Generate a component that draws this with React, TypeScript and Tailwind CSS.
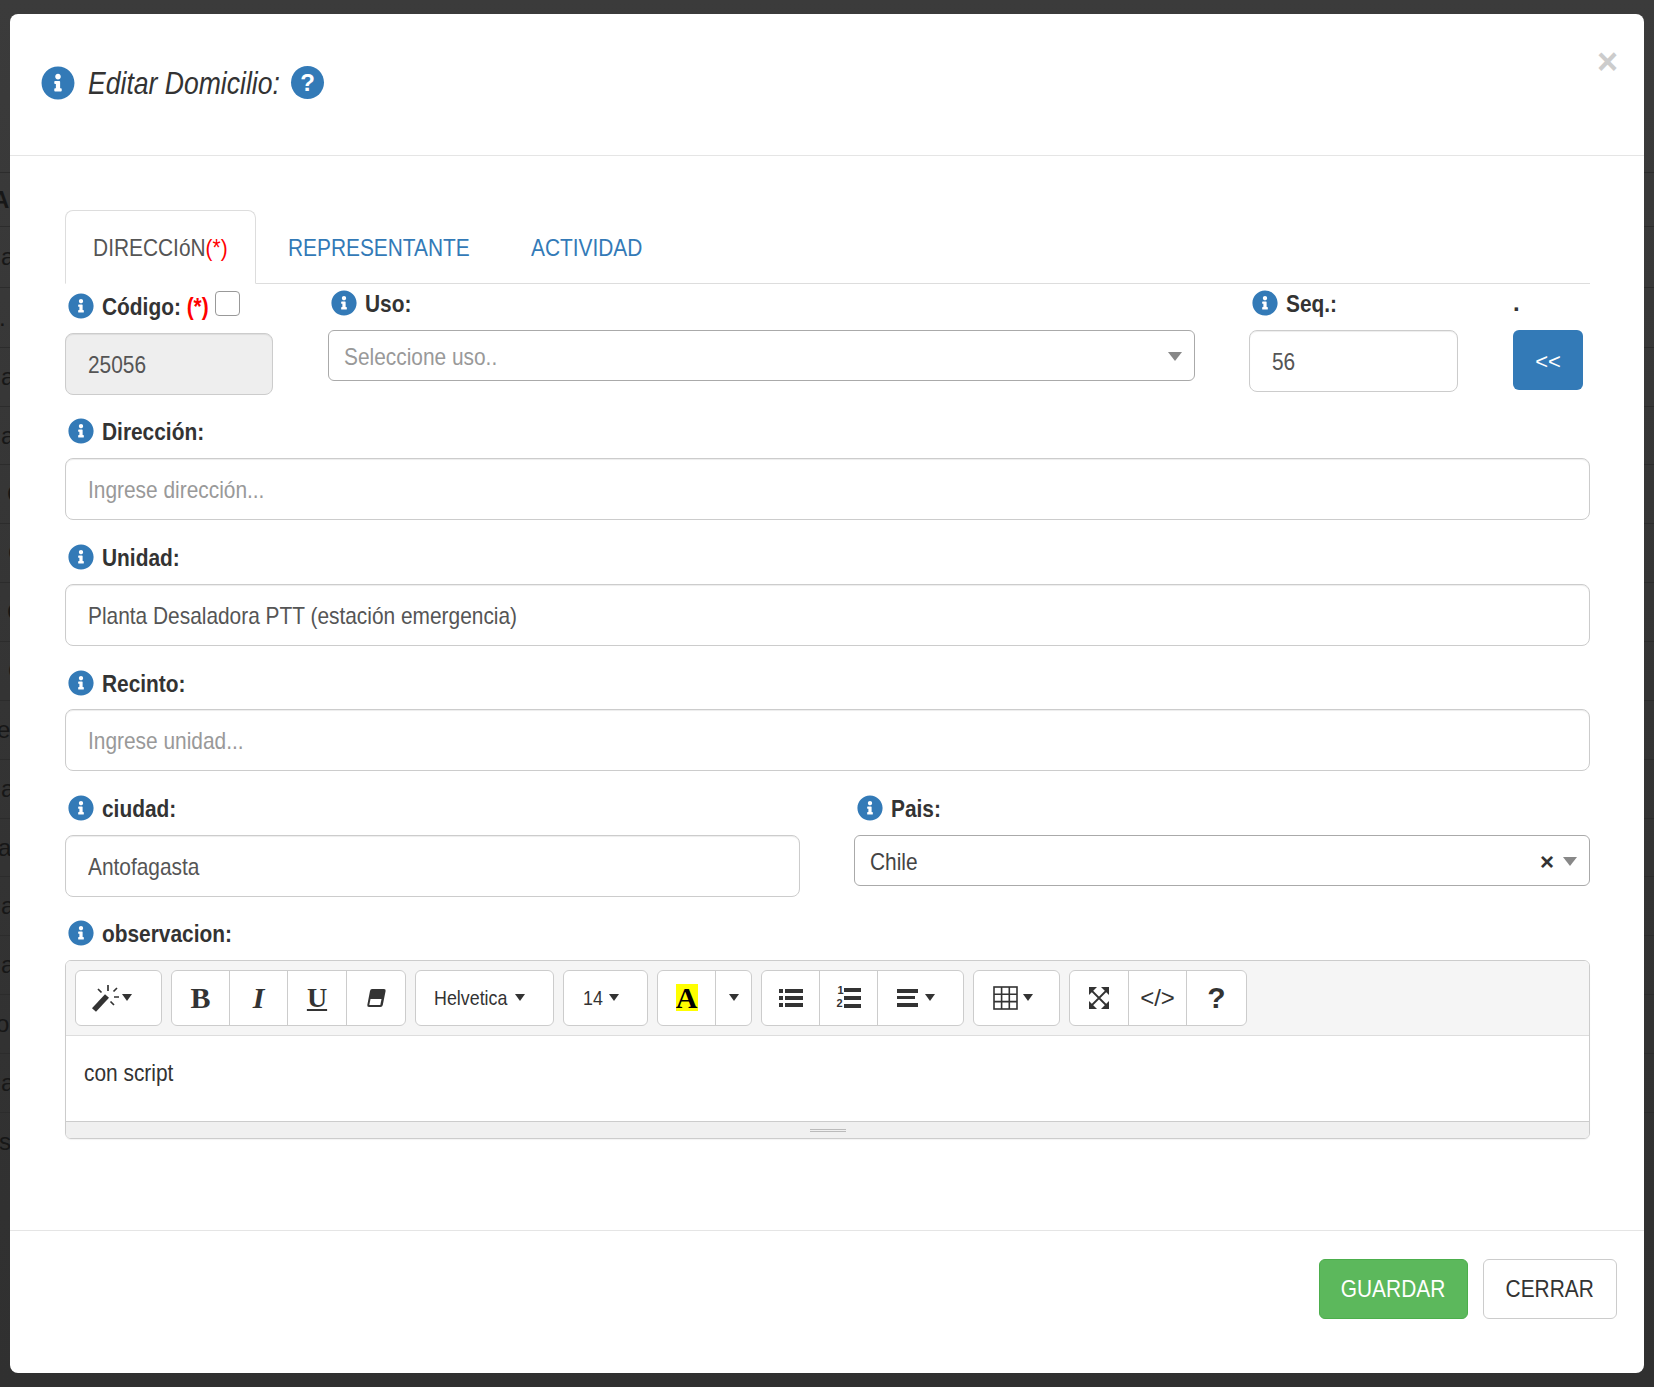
import React from 'react';
import { FaInfoCircle } from 'react-icons/fa';

// text in the reference is narrower than Liberation Sans, same height
const T = ({ children, center }: { children: React.ReactNode; center?: boolean }) => (
  <span className={`inline-block whitespace-nowrap scale-x-[0.87] ${center ? 'origin-center' : 'origin-left'}`}>{children}</span>
);

const Label = ({ text, extra }: { text: string; extra?: React.ReactNode }) => (
  <div className="flex items-center h-[26px] pl-[3px]">
    <FaInfoCircle className="w-[26px] h-[26px] text-[#337ab7] shrink-0" />
    <span className="ml-[8px] pt-[1px] font-bold text-[24px] text-[#333]">
      <T>
        {text}
        {extra && ' '}
        {extra && <span className="text-[#f00]">(*)</span>}
      </T>
    </span>
    {extra}
  </div>
);

const inputCls =
  'flex items-center h-[62px] px-[22px] pt-[1px] border border-[#ccc] rounded-[8px] text-[24px] bg-white shadow-[inset_0_1px_1px_rgba(0,0,0,0.075)]';

const selectCls = 'mt-[14px] flex items-center h-[51px] border border-[#aaa] rounded-[6px] text-[24px]';

const Caret = ({ cls = '' }: { cls?: string }) => (
  <span className={`inline-block w-0 h-0 border-x-[5px] border-x-transparent border-t-[7px] border-t-[#333] ${cls}`} />
);

const SelectArrow = () => <span className="w-0 h-0 border-x-[7px] border-x-transparent border-t-[9px] border-t-[#888]" />;

const TBtn = ({ cls, children }: { cls: string; children: React.ReactNode }) => (
  <div className={`flex items-center justify-center h-full border-r border-[#ccc] last:border-r-0 ${cls}`}>{children}</div>
);

const Group = ({ children }: { children: React.ReactNode }) => (
  <div className="flex h-[56px] bg-white border border-[#ccc] rounded-[6px]">{children}</div>
);

const Wand = () => (
  <svg width="30" height="30" viewBox="0 0 30 30" fill="none" stroke="#333">
    <path d="M3 27 L16 13" strokeWidth="5.5" />
    <path d="M17 2v6M7 6l3.500 3.500M26 5l-3.500 3.500M28 14h-5M23 22l-3.500-3.500" strokeWidth="1.7" />
  </svg>
);

const Eraser = () => (
  <svg width="20" height="20" viewBox="0 0 20 20">
    <path d="M6 1h12q2 0 1.600 2l-2.800 14q-.4 2-2.400 2H3q-2 0-1.700-2L4 3q.4-2 2-2z" fill="#333" />
    <path d="M4.500 11h11l-1.200 6H3.300z" fill="#fff" />
  </svg>
);

const ListUl = () => (
  <svg width="24" height="20" viewBox="0 0 24 20" fill="#333">
    <rect x="0" y="1" width="4" height="4" />
    <rect x="6" y="1" width="18" height="4" />
    <rect x="0" y="8" width="4" height="4" />
    <rect x="6" y="8" width="18" height="4" />
    <rect x="0" y="15" width="4" height="4" />
    <rect x="6" y="15" width="18" height="4" />
  </svg>
);

const ListOl = () => (
  <div className="relative w-[24px] h-[22px] leading-none">
    <span className="absolute left-[1px] -top-[2px] text-[11px] font-bold">1</span>
    <span className="absolute left-0 top-[11px] text-[11px] font-bold">2</span>
    <svg width="24" height="22" viewBox="0 0 24 22" fill="#333">
      <rect x="7" y="1" width="17" height="4" />
      <rect x="7" y="9" width="17" height="4" />
      <rect x="7" y="17" width="17" height="4" />
    </svg>
  </div>
);

const AlignIcon = () => (
  <svg width="22" height="20" viewBox="0 0 22 20" fill="#333">
    <rect x="0" y="1" width="21" height="4" />
    <rect x="0" y="8" width="18" height="3" />
    <rect x="0" y="15" width="21" height="4" />
  </svg>
);

const TableIcon = () => (
  <svg width="25" height="24" viewBox="0 0 25 24" fill="none" stroke="#333" strokeWidth="1.6">
    <rect x="1" y="1" width="23" height="22" />
    <path d="M1 8.300h23M1 15.600h23M8.600 1v22M16.300 1v22" />
  </svg>
);

const Fullscreen = () => (
  <svg width="22" height="24" viewBox="0 0 22 24" fill="#333">
    <path d="M3 4L19 20M19 4L3 20" stroke="#333" strokeWidth="1.8" />
    <path d="M1 1h8L1 9zM21 1h-8l8 8zM1 23h8l-8-8zM21 23h-8l8-8z" />
  </svg>
);

// table rows of the page behind the modal
const rows = [
  { h: 'h-[54px]', glyph: 'A', cls: '-ml-[8px] font-bold' },
  { h: 'h-[61px]', glyph: 'a', cls: 'ml-[1px]' },
  { h: 'h-[60px]', glyph: '. C', cls: '-ml-[1px]' },
  { h: 'h-[59px]', glyph: 'a', cls: 'ml-[1px]' },
  { h: 'h-[58px]', glyph: 'a', cls: 'ml-[1px]' },
  { h: 'h-[59px]', glyph: 'C', cls: 'ml-[7px]' },
  { h: 'h-[59px]', glyph: 'C', cls: 'ml-[8px]' },
  { h: 'h-[59px]', glyph: 'C', cls: 'ml-[7px]' },
  { h: 'h-[59px]', glyph: 'C', cls: 'ml-[8px]' },
  { h: 'h-[59px]', glyph: 'e:', cls: '-ml-[3px]' },
  { h: 'h-[59px]', glyph: 'a', cls: 'ml-[1px]' },
  { h: 'h-[58px]', glyph: 'ac', cls: '-ml-[2px]' },
  { h: 'h-[59px]', glyph: 'a', cls: 'ml-[1px]' },
  { h: 'h-[59px]', glyph: 'a', cls: 'ml-[1px]' },
  { h: 'h-[59px]', glyph: 'o', cls: '-ml-[4px]' },
  { h: 'h-[59px]', glyph: 'a', cls: 'ml-[1px]' },
  { h: 'h-[59px]', glyph: 's', cls: '-ml-[1px]' },
];

export default function App() {
  return (
    <div className="relative h-[1387px] w-[1654px] overflow-hidden bg-gradient-to-b from-[#3b3b3b] via-[#343434] to-[#303030] font-['Liberation_Sans',sans-serif] text-[#333]">
      <div className="pt-[172px] text-[24px] text-[#171717]">
        {rows.map((r, i) => (
          <div key={i} className={`flex items-center border-t border-[#2c2c2c] ${r.h}`}>
            <span className={r.cls}>{r.glyph}</span>
          </div>
        ))}
      </div>

      <div className="absolute left-[10px] top-[14px] w-[1634px] h-[1359px] bg-white rounded-[8px] flex flex-col">
        <div className="relative h-[142px] border-b border-[#e5e5e5] flex items-center pl-[31px] pb-[4px] shrink-0">
          <FaInfoCircle className="w-[34px] h-[34px] text-[#337ab7]" />
          <span className="ml-[13px] w-[203px] italic text-[32px]">
            <span className="inline-block whitespace-nowrap origin-left scale-x-[0.83]">Editar Domicilio:</span>
          </span>
          <span className="flex items-center justify-center w-[33px] h-[33px] rounded-full bg-[#337ab7] text-white font-bold text-[24px] leading-none">?</span>
          <span className="absolute right-[26px] top-[30px] text-[36px] font-bold text-[#ccc] leading-none">×</span>
        </div>

        <div className="flex-1 pl-[55px] pr-[54px] pt-[54px]">
          <div className="flex h-[74px] border-b border-[#ddd]">
            <div className="w-[191px] h-[74px] bg-white border border-[#ddd] border-b-white rounded-t-[8px] flex items-center justify-center text-[24px] text-[#555] pt-[2px]">
              <T center>
                DIRECCIóN<span className="text-[#f00]">(*)</span>
              </T>
            </div>
            <div className="ml-[32px] flex items-center text-[24px] text-[#337ab7] pt-[3px]"><T>REPRESENTANTE</T></div>
            <div className="ml-[34px] flex items-center text-[24px] text-[#337ab7] pt-[3px]"><T>ACTIVIDAD</T></div>
          </div>

          <div className="flex">
            <div className="w-[208px] pt-[9px]">
              <Label
                text="Código:"
                extra={<span className="-ml-[10px] -mt-[5px] w-[25px] h-[25px] shrink-0 border border-[#999] rounded-[4px] bg-white" />}
              />
              <div className={`${inputCls} mt-[14px] !bg-[#eee] text-[#555]`}><T>25056</T></div>
            </div>
            <div className="ml-[55px] w-[867px] pt-[6px]">
              <Label text="Uso:" />
              <div className={`${selectCls} justify-between pl-[15px] pr-[12px] pt-[2px] text-[#999]`}>
                <T>Seleccione uso..</T>
                <SelectArrow />
              </div>
            </div>
            <div className="ml-[54px] w-[209px] pt-[6px]">
              <Label text="Seq.:" />
              <div className={`${inputCls} mt-[14px] text-[#555]`}><T>56</T></div>
            </div>
            <div className="ml-[55px] w-[70px] pt-[6px]">
              <div className="h-[26px] font-bold text-[24px] leading-[26px]">.</div>
              <div className="mt-[14px] flex items-center justify-center h-[60px] pt-[3px] rounded-[6px] bg-[#337ab7] text-white text-[22px]">&lt;&lt;</div>
            </div>
          </div>

          <div className="mt-[23px]">
            <Label text="Dirección:" />
            <div className={`${inputCls} mt-[14px] text-[#999]`}><T>Ingrese dirección...</T></div>
          </div>
          <div className="mt-[24px]">
            <Label text="Unidad:" />
            <div className={`${inputCls} mt-[14px] text-[#555]`}><T>Planta Desaladora PTT (estación emergencia)</T></div>
          </div>
          <div className="mt-[24px]">
            <Label text="Recinto:" />
            <div className={`${inputCls} mt-[13px] text-[#999]`}><T>Ingrese unidad...</T></div>
          </div>
          <div className="mt-[24px] flex gap-[54px]">
            <div className="w-[735px]">
              <Label text="ciudad:" />
              <div className={`${inputCls} mt-[14px] text-[#555]`}><T>Antofagasta</T></div>
            </div>
            <div className="flex-1">
              <Label text="Pais:" />
              <div className={`${selectCls} pl-[15px] pr-[12px] pt-[2px] text-[#444]`}>
                <span className="flex-1"><T>Chile</T></span>
                <span className="font-bold text-[24px] text-[#333] mr-[9px]">×</span>
                <SelectArrow />
              </div>
            </div>
          </div>

          <div className="mt-[23px]">
            <Label text="observacion:" />
            <div className="mt-[14px] border border-[#ccc] rounded-[6px] overflow-hidden shadow-[0_1px_1px_rgba(0,0,0,0.05)]">
              <div className="flex items-center gap-[9px] h-[75px] pl-[9px] pb-[1px] bg-[#f5f5f5] border-b border-[#ddd]">
                <Group><TBtn cls="w-[85px] !justify-start pl-[15px]"><Wand /><Caret cls="ml-[1px]" /></TBtn></Group>
                <Group>
                  <TBtn cls="w-[58px]"><span className="font-['Liberation_Serif',serif] font-bold text-[30px] leading-none">B</span></TBtn>
                  <TBtn cls="w-[58px]"><span className="font-['Liberation_Serif',serif] font-bold italic text-[30px] leading-none">I</span></TBtn>
                  <TBtn cls="w-[59px]"><span className="font-['Liberation_Serif',serif] font-bold underline text-[28px] leading-none">U</span></TBtn>
                  <TBtn cls="w-[58px]"><Eraser /></TBtn>
                </Group>
                <Group>
                  <TBtn cls="w-[137px] !justify-start pl-[18px] text-[21px]">
                    <span className="inline-block origin-left scale-x-[0.85]">Helvetica</span>
                    <Caret cls="-ml-[5px]" />
                  </TBtn>
                </Group>
                <Group>
                  <TBtn cls="w-[83px] !justify-start pl-[19px] text-[21px]">
                    <span className="inline-block origin-left scale-x-[0.85]">14</span>
                    <Caret cls="ml-[3px]" />
                  </TBtn>
                </Group>
                <Group>
                  <TBtn cls="w-[58px]">
                    <span className="flex items-center justify-center w-[22px] h-[27px] bg-[#ff0] text-black font-['Liberation_Serif',serif] font-bold text-[30px] leading-none overflow-hidden">A</span>
                  </TBtn>
                  <TBtn cls="w-[35px]"><Caret /></TBtn>
                </Group>
                <Group>
                  <TBtn cls="w-[58px]"><ListUl /></TBtn>
                  <TBtn cls="w-[58px]"><ListOl /></TBtn>
                  <TBtn cls="w-[85px] pr-[9px]"><AlignIcon /><Caret cls="ml-[6px]" /></TBtn>
                </Group>
                <Group><TBtn cls="w-[85px] pr-[8px]"><TableIcon /><Caret cls="ml-[5px]" /></TBtn></Group>
                <Group>
                  <TBtn cls="w-[59px]"><Fullscreen /></TBtn>
                  <TBtn cls="w-[58px]"><span className="text-[24px] leading-none">&lt;/&gt;</span></TBtn>
                  <TBtn cls="w-[59px]"><span className="font-bold text-[30px] leading-none">?</span></TBtn>
                </Group>
              </div>
              <div className="h-[85px] pl-[18px] pt-[19px] text-[24px]"><T>con script</T></div>
              <div className="flex flex-col items-center justify-center gap-[1px] h-[17px] bg-[#f0f0f0] border-t border-[#ccc]">
                <span className="w-[36px] border-t border-[#bbb]" />
                <span className="w-[36px] border-t border-[#bbb]" />
              </div>
            </div>
          </div>
        </div>

        <div className="h-[143px] border-t border-[#e5e5e5] flex justify-end gap-[15px] pt-[28px] pr-[27px] shrink-0">
          <div className="flex items-center justify-center w-[149px] h-[60px] rounded-[6px] bg-[#5cb85c] border border-[#4cae4c] text-white text-[24px]"><T center>GUARDAR</T></div>
          <div className="flex items-center justify-center w-[134px] h-[60px] rounded-[6px] bg-white border border-[#ccc] text-[24px]"><T center>CERRAR</T></div>
        </div>
      </div>
    </div>
  );
}
